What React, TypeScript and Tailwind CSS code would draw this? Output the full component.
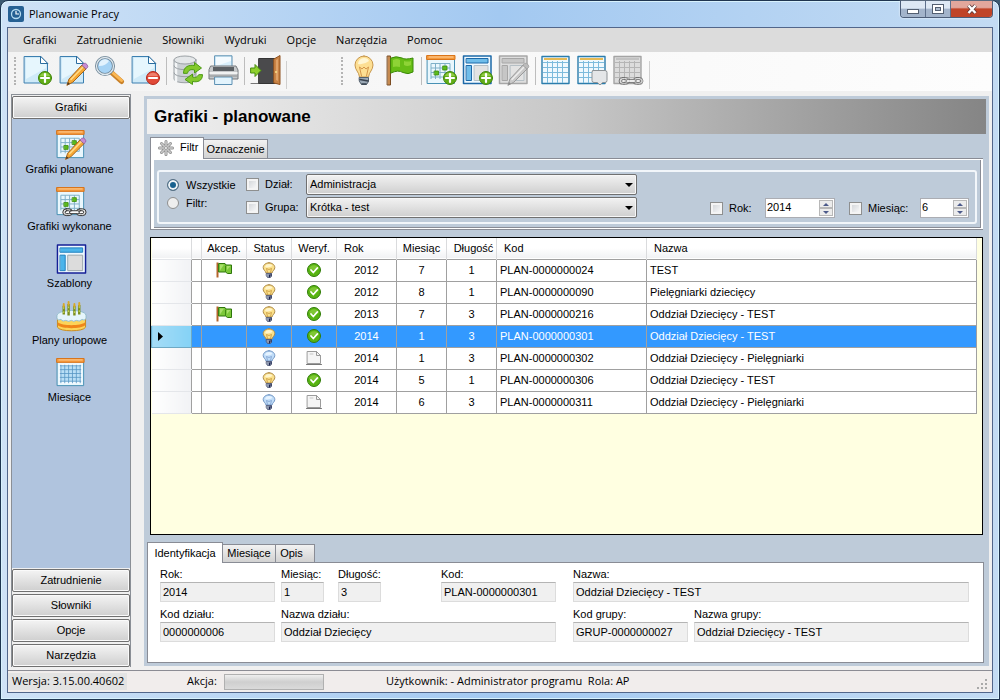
import { useState } from "react";
import type { ReactNode } from "react";

type IconProps = { className?: string };

function Svg({ className, children, size = 32 }: { className?: string; children: ReactNode; size?: number }) {
  return (
    <svg viewBox={`0 0 ${size} ${size}`} fill="none" strokeLinecap="round" strokeLinejoin="round" className={className} aria-hidden="true">
      {children}
    </svg>
  );
}

/* shared icon parts, all on a 32px grid */

function Page() {
  return (
    <>
      <path d="M3.5 1.5h16l7 7v19.500h-23z" fill="#cfeaf8" stroke="#3b7fb0" />
      <path d="M5 3h14v6h6v4L5 24z" fill="#e6f6fd" />
      <path d="M19.500 1.500v7h7z" fill="#fff" stroke="#2a6c9e" />
    </>
  );
}

function PlusBadge() {
  return (
    <>
      <circle cx="24" cy="23" r="6.500" fill="#62ad17" stroke="#3f8409" />
      <path d="M19 21a5.500 5.500 0 0 1 10 0z" fill="#8fcb43" />
      <path d="M24 19v8M20 23h8" stroke="#fff" strokeWidth="2.200" />
    </>
  );
}

function Pencil({ muted = false }: { muted?: boolean }) {
  return (
    <>
      <path d="M10 30l2-6L25 10l4 4-13 13z" fill={muted ? "#c9c9c9" : "#f6a834"} stroke={muted ? "#999" : "#a8651a"} />
      <path d="M14 24.500L26 12" stroke={muted ? "#eee" : "#ffdc8a"} strokeWidth="1.500" />
      <path d="M25 10l1.500-1.500q2-1 3.500 1t.500 3L29 14z" fill={muted ? "#bbb" : "#c68bd4"} stroke={muted ? "#999" : "#86519b"} strokeWidth=".7" />
      <path d="M10 30l1-3 2 2z" fill={muted ? "#888" : "#4b3a28"} />
    </>
  );
}

function CalendarBase() {
  return (
    <>
      <rect x="1.500" y="1" width="27" height="27.500" fill="#eaf7fd" stroke="#4791b4" />
      <rect x="1" y=".5" width="28" height="4" fill="#f59a3c" stroke="#d9741a" />
      <path d="M3 2h24" stroke="#ffd09a" />
      <path d="M5 8.500h19M5 13h19M5 17.500h19M5 22h19M5 8.500V24M9.500 8.500V24M14 8.500V24M19 8.500V24M24 8.500V22" stroke="#7fb0c8" strokeLinecap="butt" />
    </>
  );
}

function GreenDays() {
  return (
    <>
      <rect x="17" y="11" width="4" height="4" fill="#5cbb1c" stroke="#398a0a" strokeWidth=".8" />
      <rect x="8.500" y="16" width="4" height="4" fill="#5cbb1c" stroke="#398a0a" strokeWidth=".8" />
    </>
  );
}

function Chain() {
  return (
    <g stroke="#333" strokeWidth="1">
      <rect x="7" y="22.500" width="10" height="7" rx="3.500" fill="#ddd" />
      <rect x="9.500" y="24.500" width="5" height="3" rx="1.500" fill="#fff" />
      <rect x="21" y="22.500" width="10" height="7" rx="3.500" fill="#ddd" />
      <rect x="23.500" y="24.500" width="5" height="3" rx="1.500" fill="#fff" />
      <rect x="14" y="24.500" width="10" height="3" rx="1.500" fill="#fff" />
    </g>
  );
}

function TemplateBase({ muted = false }: { muted?: boolean }) {
  const line = muted ? "#a6a6a6" : "#1d69a8";
  const fill = muted ? "#c6c6c6" : "#6fbdea";
  return (
    <>
      <rect x="1.500" y="1" width="27.500" height="27.500" fill={muted ? "#dedede" : "#eff9ff"} stroke={line} strokeWidth="1.500" />
      <rect x="4.500" y="3.500" width="21.500" height="4.500" fill={fill} stroke={line} />
      <rect x="4.500" y="10.500" width="5" height="15" fill={fill} stroke={line} />
      <rect x="12.500" y="10.500" width="13.500" height="15" fill="#e3e3e3" stroke="#b5bfc5" />
    </>
  );
}

function SheetBase({ muted = false }: { muted?: boolean }) {
  return (
    <>
      <rect x="2" y="1.500" width="27" height="27" fill={muted ? "#dcdcdc" : "#f0f9fe"} stroke={muted ? "#a4a4a4" : "#2b7dac"} strokeWidth="1.400" />
      <path d="M4 4h23" stroke={muted ? "#c2c2c2" : "#e5ba55"} strokeWidth="2" strokeLinecap="butt" />
      <path d="M3 7.500h25M3 12.500h25M3 17.500h25M3 22.500h25M7.500 6v22M12.500 6v22M17.500 6v22M22.500 6v22" stroke={muted ? "#b5b5b5" : "#7dbbdc"} strokeLinecap="butt" />
    </>
  );
}

function AddPageIcon({ className }: IconProps) {
  return <Svg className={className}><Page /><PlusBadge /></Svg>;
}

function EditPageIcon({ className }: IconProps) {
  return <Svg className={className}><Page /><Pencil /></Svg>;
}

function DeletePageIcon({ className }: IconProps) {
  return (
    <Svg className={className}>
      <Page />
      <circle cx="24" cy="23" r="6.500" fill="#e14a38" stroke="#b3281d" />
      <path d="M19 21a5.500 5.500 0 0 1 10 0z" fill="#ee7f6d" />
      <path d="M20 23h8" stroke="#fff" strokeWidth="2.200" />
    </Svg>
  );
}

function SearchIcon({ className }: IconProps) {
  return (
    <Svg className={className}>
      <path d="M19 18l9.500 8.500" stroke="#c98128" strokeWidth="5" />
      <path d="M20 18l8.500 7.500" stroke="#fbb753" strokeWidth="3" />
      <circle cx="12" cy="11" r="8.500" fill="#a6d3f5" stroke="#6d8596" strokeWidth="3" />
      <circle cx="12" cy="11" r="8.500" stroke="#dfe8ee" strokeWidth="1.300" />
      <path d="M6 11a6 6 0 0 1 10-5q-3 5-10 5" fill="#e2f2fd" />
    </Svg>
  );
}

function DatabaseIcon({ className }: IconProps) {
  return (
    <Svg className={className}>
      <path d="M3 5v19c0 5 22 5 22 0V5" fill="#ccd1d4" stroke="#9ba1a5" />
      <path d="M5 8v18" stroke="#f4f6f7" strokeWidth="2.500" />
      <ellipse cx="14" cy="5" rx="11" ry="4" fill="#e4e7e9" stroke="#9ba1a5" />
      <path d="M3 11c0 5 22 5 22 0M3 18c0 5 22 5 22 0" stroke="#9ba1a5" />
      <path d="M12.500 18c0-6 5-8.500 11-7.500V7.500l7 5.500-7 5v-3c-4-1-6 0-7 3z" fill="#83c92b" stroke="#4c9a14" />
      <path d="M31.500 20c0 6-5 7.500-10 6.500v3l-7.500-5 7.500-5.500v3c3 1 5 0 6-2z" fill="#83c92b" stroke="#4c9a14" />
    </Svg>
  );
}

function PrinterIcon({ className }: IconProps) {
  return (
    <Svg className={className}>
      <rect x="8" y=".8" width="17" height="13" fill="#d9effb" stroke="#5c90b3" />
      <path d="M9 2h15v4L9 11z" fill="#f4fbff" />
      <path d="M4 11h25l2 4v9H2v-9z" fill="#c6c8ca" stroke="#75797c" />
      <path d="M6 12h21v4H6z" fill="#5c6064" />
      <path d="M3 18h27" stroke="#fff" strokeWidth="1.500" />
      <rect x="8" y="22" width="17" height="7.500" fill="#e3f4fd" stroke="#5c90b3" />
      <path d="M3 21h27" stroke="#8c9092" />
    </Svg>
  );
}

function ExitIcon({ className }: IconProps) {
  return (
    <Svg className={className}>
      <path d="M2 28.500h28" stroke="#777" />
      <rect x="10" y="3.500" width="16" height="25" fill="#4a4a4c" stroke="#343434" />
      <path d="M25 4l6-3.500v29l-6-1.500z" fill="#c98345" stroke="#8f5321" />
      <path d="M27 5l2-1v22l-2-1z" fill="#dea268" />
      <circle cx="27" cy="17" r="1" fill="#f9df87" />
      <path d="M2 13h4V9.500l6 6-6 6V18H2z" fill="#8fd02d" stroke="#478c0e" />
    </Svg>
  );
}

function BulbIcon({ className }: IconProps) {
  return (
    <Svg className={className}>
      <path d="M16 1a9 9 0 0 0-9 9c0 5 4 7 4.500 12h9C21 17 25 15 25 10a9 9 0 0 0-9-9z" fill="#fddf93" stroke="#c7974d" />
      <path d="M10 9a6 6 0 0 1 6-6q4 0 5 3-5 4-11 3" fill="#fff6d4" />
      <path d="M13.500 21l-2-9 2.500 2 2-2 2 2 2.500-2-2 9" stroke="#d4964a" />
      <path d="M11.500 22.500h9v4l-2 3h-5l-2-3z" fill="#9aa8b5" stroke="#53606d" />
      <path d="M12 24.500l8 1.500M14 29h4" stroke="#39434f" strokeWidth="1.500" />
    </Svg>
  );
}

function SmallBulbIcon({ className, off = false }: IconProps & { off?: boolean }) {
  return (
    <Svg size={16} className={className}>
      <path d="M8 .8C4.600.8 2.200 3 2.200 5.600c0 2.400 2.300 3 2.800 5.400h6c.5-2.400 2.800-3 2.800-5.400C13.800 3 11.400.8 8 .8z" fill={off ? "#bfdcf8" : "#fbe08a"} stroke={off ? "#7296c4" : "#ad8a48"} />
      <path d="M4 5c.5-2 2-3 4-3s3 1 3.500 2C9 5.500 6.500 6 4 5z" fill={off ? "#e6f3ff" : "#fff5cc"} />
      <path d="M6.500 10.500L5.500 6.500l2.500 1 2.500-1-1 4" stroke={off ? "#7f9fcf" : "#c99840"} strokeWidth=".8" />
      <path d="M5.500 11.500h5v2.500l-1 1.500h-3l-1-1.500z" fill="#8e98ae" stroke="#4c5573" strokeWidth=".8" />
      <path d="M8.500 13v2M10 12v2" stroke="#1c2450" />
    </Svg>
  );
}

function FlagIcon({ className }: IconProps) {
  return (
    <Svg className={className}>
      <rect x="3.500" y="1" width="3" height="29" fill="#c68a50" stroke="#7b4c22" />
      <path d="M7 3q5-2.500 11 0 3 2 11 0v14q-5 3-10 .5-5-3-12 .5z" fill="#67bd16" stroke="#3b8a08" />
      <path d="M9 5q4-2 7 0v7q-4-1-7 0zM20 6q4 1 7 0v4q-4 2-7 0z" fill="#8ed336" />
    </Svg>
  );
}

function SmallFlagIcon({ className }: IconProps) {
  return (
    <Svg size={16} className={className}>
      <path d="M1.500.5v15" stroke="#b4642c" strokeWidth="2" strokeLinecap="butt" />
      <path d="M3 1.500h6l1 1.500h5.500v8.500h-4l-2-1.500H3z" fill="#7cc83a" stroke="#2d760a" />
      <path d="M4 2.500h4l-4 6zM11 4h3.500L11 8z" fill="#a9df6c" />
      <path d="M9.500 4v5.500" stroke="#3d8a12" />
    </Svg>
  );
}

function AddCalendarIcon({ className }: IconProps) {
  return <Svg className={className}><CalendarBase /><GreenDays /><PlusBadge /></Svg>;
}

function EditCalendarIcon({ className }: IconProps) {
  return <Svg className={className}><CalendarBase /><GreenDays /><Pencil /></Svg>;
}

function LinkCalendarIcon({ className }: IconProps) {
  return <Svg className={className}><CalendarBase /><GreenDays /><Chain /></Svg>;
}

function MonthIcon({ className }: IconProps) {
  return (
    <Svg className={className}>
      <CalendarBase />
      <path d="M3 6h24v21H3z" fill="#f1faff" />
      <path d="M5 8h20v16H5z" fill="#b9dff6" />
      <path d="M4 8h22M4 12h22M4 16h22M4 20h22M4 24h22M5 7v19M9 7v19M13 7v19M17 7v19M21 7v19M25 7v19" stroke="#5595c4" strokeWidth=".8" strokeLinecap="butt" />
    </Svg>
  );
}

function AddTemplateIcon({ className }: IconProps) {
  return <Svg className={className}><TemplateBase /><PlusBadge /></Svg>;
}

function EditTemplateIcon({ className }: IconProps) {
  return <Svg className={className}><TemplateBase muted /><Pencil muted /></Svg>;
}

function TemplateIcon({ className }: IconProps) {
  return (
    <Svg className={className}>
      <rect x="1.500" y="1" width="29" height="29" fill="#eff9ff" stroke="#141f96" strokeWidth="1.500" />
      <rect x="4.500" y="4" width="23" height="4.500" fill="#4bb4ea" stroke="#1f7fbd" />
      <rect x="4.500" y="11.500" width="5" height="16" fill="#4bb4ea" stroke="#1f7fbd" />
      <rect x="12.500" y="11.500" width="15" height="16" fill="#dcdcdc" stroke="#9aa5ab" />
    </Svg>
  );
}

function SheetIcon({ className }: IconProps) {
  return <Svg className={className}><SheetBase /></Svg>;
}

function SheetNoteIcon({ className }: IconProps) {
  return (
    <Svg className={className}>
      <SheetBase />
      <path d="M17 15.500h12q2 0 2 2v8q0 2-2 2h-2.500L24 30l-2.500-2.500H18q-2 0-2-2v-8q0-2 1-2z" fill="#e4e6e8" stroke="#8d9296" />
    </Svg>
  );
}

function SheetLinkIcon({ className }: IconProps) {
  return (
    <Svg className={className}>
      <SheetBase muted />
      <g opacity=".5"><Chain /></g>
    </Svg>
  );
}

function CakeIcon({ className }: IconProps) {
  return (
    <Svg className={className}>
      <path d="M1.500 15v12c2 5 27 5 29 0V15z" fill="#fcd45a" stroke="#c88a20" />
      <path d="M2 22c4 4 24 4 28 0v3c-4 4-24 4-28 0z" fill="#f0851a" />
      <path d="M1 15c0-7 30-7 30 0v3q-2 3-4 1-3 3-6 1-3 2-5 0-3 2-6 0-3 2-5-1-3 2-4-1z" fill="#e6f5fb" stroke="#91bccd" />
      <path d="M8 5v9M13 3v12M19 5v10M24 4v10" stroke="#7c8f1d" strokeWidth="2.500" strokeLinecap="butt" />
      <path d="M8 3v3M13 1v3M19 3v3M24 2v3" stroke="#d8a928" strokeWidth="2" />
      <path d="M8 7v5M13 6v6M19 7v5M24 6v6" stroke="#cfdf58" strokeDasharray="1 3" />
    </Svg>
  );
}

function CheckIcon({ className }: IconProps) {
  return (
    <Svg size={16} className={className}>
      <circle cx="8" cy="8" r="6.500" fill="#58b412" stroke="#327d0a" />
      <path d="M3 7a5.200 5.200 0 0 1 10 0q-5 2-10 0" fill="#7ec734" />
      <path d="M5 8l2.300 2.500L11.300 6" stroke="#fff" strokeWidth="1.800" />
    </Svg>
  );
}

function DraftIcon({ className }: IconProps) {
  return (
    <Svg size={16} className={className}>
      <path d="M1.500 1.500h9l4 4v8h-13z" fill="#f5f5f5" stroke="#9b9b9b" />
      <path d="M10.500 1.500v4h4" stroke="#9b9b9b" />
      <path d="M4 4h3" stroke="#c5c5c5" />
      <path d="M.5 14.500h15" stroke="#777" />
    </Svg>
  );
}

function GearIcon({ className }: IconProps) {
  return (
    <Svg size={16} className={className}>
      <path d="M8 1.500v13M1.500 8h13M3.500 3.500l9 9M12.500 3.500l-9 9" stroke="#8d8d8d" strokeWidth="3" />
      <path d="M8 1.500v13M1.500 8h13M3.500 3.500l9 9M12.500 3.500l-9 9" stroke="#c9c9c9" strokeWidth="1.600" />
      <circle cx="8" cy="8" r="1.500" fill="#fff" stroke="#999" />
    </Svg>
  );
}

const MENU = ["Grafiki", "Zatrudnienie", "Słowniki", "Wydruki", "Opcje", "Narzędzia", "Pomoc"];

const MAIN_TOOLS = [
  [
    { label: "Dodaj", icon: AddPageIcon },
    { label: "Edytuj", icon: EditPageIcon },
    { label: "Podgląd", icon: SearchIcon },
    { label: "Usuń", icon: DeletePageIcon },
  ],
  [
    { label: "Odśwież", icon: DatabaseIcon },
    { label: "Drukuj", icon: PrinterIcon },
  ],
  [{ label: "Zamknij", icon: ExitIcon }],
];

const PLAN_TOOLS = [
  [
    { label: "Status", icon: BulbIcon },
    { label: "Akceptacja", icon: FlagIcon },
  ],
  [
    { label: "Dodaj grafik", icon: AddCalendarIcon },
    { label: "Dodaj szablon", icon: AddTemplateIcon },
    { label: "Edytuj szablon", icon: EditTemplateIcon },
  ],
  [
    { label: "Miesiąc", icon: SheetIcon },
    { label: "Uwagi", icon: SheetNoteIcon },
    { label: "Powiązania", icon: SheetLinkIcon },
  ],
];

const SIDE_ITEMS = [
  { label: "Grafiki planowane", icon: EditCalendarIcon },
  { label: "Grafiki wykonane", icon: LinkCalendarIcon },
  { label: "Szablony", icon: TemplateIcon },
  { label: "Plany urlopowe", icon: CakeIcon },
  { label: "Miesiące", icon: MonthIcon },
];

const SIDE_GROUPS = ["Zatrudnienie", "Słowniki", "Opcje", "Narzędzia"];

const PLANS = [
  { flag: true, on: true, ok: true, year: 2012, month: 7, len: 1, code: "PLAN-0000000024", name: "TEST" },
  { flag: false, on: true, ok: true, year: 2012, month: 8, len: 1, code: "PLAN-0000000090", name: "Pielęgniarki dziecięcy" },
  { flag: true, on: true, ok: true, year: 2013, month: 7, len: 3, code: "PLAN-0000000216", name: "Oddział Dziecięcy - TEST" },
  { flag: false, on: true, ok: true, year: 2014, month: 1, len: 3, code: "PLAN-0000000301", name: "Oddział Dziecięcy - TEST" },
  { flag: false, on: false, ok: false, year: 2014, month: 1, len: 3, code: "PLAN-0000000302", name: "Oddział Dziecięcy - Pielęgniarki" },
  { flag: false, on: true, ok: true, year: 2014, month: 5, len: 1, code: "PLAN-0000000306", name: "Oddział Dziecięcy - TEST" },
  { flag: false, on: false, ok: false, year: 2014, month: 6, len: 3, code: "PLAN-0000000311", name: "Oddział Dziecięcy - Pielęgniarki" },
];

const HEADINGS = [
  { label: "Akcep.", className: "text-center" },
  { label: "Status", className: "text-center" },
  { label: "Weryf.", className: "text-center" },
  { label: "Rok", className: "pl-[7px] text-left" },
  { label: "Miesiąc", className: "text-center" },
  { label: "Długość", className: "pl-1 text-center" },
  { label: "Kod", className: "pl-[7px] text-left" },
  { label: "Nazwa", className: "pl-[7px] text-left" },
];

type Tool = { label: string; icon: (props: IconProps) => ReactNode };

function Toolbar({ groups }: { groups: Tool[][] }) {
  return (
    <div className="flex items-center pl-[3px]">
      <span className="mr-[3px] h-7 border-l-2 border-dotted border-[#b4b4b4]" />
      {groups.map((tools, i) => (
        <div key={i} className="flex items-center">
          {i > 0 && <span className="mr-[2px] ml-[3px] h-7 w-px bg-[#bdbdbd]" />}
          {tools.map(({ label, icon: Icon }) => (
            <button key={label} type="button" aria-label={label} title={label} className="flex h-9 w-9 items-center justify-center">
              <Icon className="h-8 w-8" />
            </button>
          ))}
        </div>
      ))}
      <span className="ml-[3px] h-7 w-px self-end bg-[#cfcfcf]" />
    </div>
  );
}

function TitleBar() {
  return (
    <header className="flex h-[26px] items-start justify-between">
      <div className="flex h-[26px] items-center gap-[5px] pl-px">
        <svg viewBox="0 0 16 16" className="h-4 w-4" fill="none" aria-hidden="true">
          <rect width="16" height="16" rx="2" fill="#256093" />
          <circle cx="8" cy="8" r="4.500" stroke="#b5dcf2" strokeWidth="1.300" />
          <path d="M8 5v3h3" stroke="#fff" strokeWidth="1.200" />
        </svg>
        <h1 className="text-[11px]">Planowanie Pracy</h1>
      </div>
      <div className="flex h-[17px] overflow-hidden rounded-b border border-t-0 border-[#4c5d78] shadow-[0_0_2px_#fff]">
        <button type="button" aria-label="Minimalizuj" className="flex w-[25px] items-center justify-center border-r border-[#5e708c] bg-linear-to-b from-[#dde8f4] from-45% to-[#a3b4cb] to-50%">
          <svg viewBox="0 0 14 12" className="h-3 w-[14px]" aria-hidden="true"><rect x="1.500" y="6.500" width="11" height="4" fill="#fff" stroke="#535f71" /></svg>
        </button>
        <button type="button" aria-label="Maksymalizuj" className="flex w-[25px] items-center justify-center border-r border-[#5e708c] bg-linear-to-b from-[#dde8f4] from-45% to-[#a3b4cb] to-50%">
          <svg viewBox="0 0 14 12" className="h-3 w-[14px]" aria-hidden="true">
            <rect x="1.500" y="1.500" width="11" height="9" fill="#fff" stroke="#535f71" />
            <rect x="4.500" y="4.500" width="5" height="3" fill="#aebdd0" stroke="#535f71" />
          </svg>
        </button>
        <button type="button" aria-label="Zamknij okno" className="flex w-[41px] items-center justify-center bg-linear-to-b from-[#e2a79c] from-40% to-[#c04428] to-50%">
          <svg viewBox="0 0 14 12" className="h-3 w-[14px]" aria-hidden="true">
            <path d="M3.500 2.500l7 7.500M10.500 2.500l-7 7.500" stroke="#5b3a3a" strokeWidth="4" />
            <path d="M3.500 2.500l7 7.500M10.500 2.500l-7 7.500" stroke="#fff" strokeWidth="2.400" />
          </svg>
        </button>
      </div>
    </header>
  );
}

function SideButton({ label }: { label: string }) {
  return (
    <button type="button" className="h-[23px] w-full rounded-[2px] border border-[#707070] bg-linear-to-b from-[#f4f4f4] to-[#cfcfcf] text-center shadow-[inset_0_0_0_1px_#fafafa]">
      {label}
    </button>
  );
}

function Sidebar() {
  return (
    <nav className="flex w-[120px] shrink-0 flex-col border border-b-0 border-[#8a8f96] bg-[#b0c4de]">
      <div className="bg-[#f0f0f0] pt-px">
        <SideButton label="Grafiki" />
      </div>
      <ul className="flex flex-1 flex-col gap-[11px] pt-[11px]">
        {SIDE_ITEMS.map(({ label, icon: Icon }) => (
          <li key={label}>
            <a href="#" className="flex h-[46px] flex-col items-center justify-between">
              <Icon className="h-[31px] w-[31px]" />
              <span className="pr-[3px] leading-[14px]">{label}</span>
            </a>
          </li>
        ))}
      </ul>
      <div className="flex flex-col gap-[2px] bg-[#f0f0f0] pt-px">
        {SIDE_GROUPS.map((label) => (
          <SideButton key={label} label={label} />
        ))}
      </div>
    </nav>
  );
}

function Check({ label, id, className = "" }: { label: string; id: string; className?: string }) {
  return (
    <div className={`flex items-center gap-[6px] ${className}`}>
      <input id={id} type="checkbox" className="h-[13px] w-[13px] appearance-none border border-[#8e8f8f] bg-linear-to-br from-[#cdd0d4] to-white shadow-[inset_0_0_0_2px_#f4f4f4] checked:bg-[#2b5f8c]" />
      <label htmlFor={id}>{label}</label>
    </div>
  );
}

function Radio({ label, id, defaultChecked }: { label: string; id: string; defaultChecked?: boolean }) {
  return (
    <div className="flex h-[18px] items-center gap-[7px]">
      <input
        id={id}
        type="radio"
        name="scope"
        defaultChecked={defaultChecked}
        className="h-3 w-3 appearance-none rounded-full border border-[#8e8f8f] bg-[#eeeeee] checked:border-[#5a7184] checked:bg-[#17618f] checked:shadow-[inset_0_0_0_2px_#eef3f6]"
      />
      <label htmlFor={id}>{label}</label>
    </div>
  );
}

function Combo({ label, options }: { label: string; options: string[] }) {
  return (
    <div className="relative">
      <select aria-label={label} className="block h-[21px] w-full appearance-none rounded-[2px] border border-[#707070] bg-linear-to-b from-[#f2f2f2] to-[#cfcfcf] pl-[3px] text-[11px] leading-[19px] shadow-[inset_0_0_0_1px_#f7f7f7]">
        {options.map((o) => (
          <option key={o}>{o}</option>
        ))}
      </select>
      <svg viewBox="0 0 8 4" className="pointer-events-none absolute top-[9px] right-1 h-1 w-2" aria-hidden="true">
        <path d="M0 0h8L4 4z" fill="#000" />
      </svg>
    </div>
  );
}

function Spinner({ label, value, className }: { label: string; value: number; className: string }) {
  const [current, setCurrent] = useState(value);
  return (
    <div className={`flex h-5 border border-[#abadb3] bg-white p-px ${className}`}>
      <input
        aria-label={label}
        value={current}
        onChange={(e) => setCurrent(Number(e.target.value) || 0)}
        className="min-w-0 flex-1 pb-[2px] text-[11px] leading-[14px] outline-none"
      />
      <div className="flex w-[14px] flex-col">
        <button type="button" aria-label={`${label} +`} onClick={() => setCurrent(current + 1)} className="flex flex-1 items-center justify-center border border-[#b8b8b8] bg-[#ececec]">
          <svg viewBox="0 0 6 3" className="h-[3px] w-[6px]" aria-hidden="true"><path d="M0 3h6L3 0z" fill="#4c5a8a" /></svg>
        </button>
        <button type="button" aria-label={`${label} -`} onClick={() => setCurrent(current - 1)} className="flex flex-1 items-center justify-center border border-[#b8b8b8] bg-[#ececec]">
          <svg viewBox="0 0 6 3" className="h-[3px] w-[6px]" aria-hidden="true"><path d="M0 0h6L3 3z" fill="#4c5a8a" /></svg>
        </button>
      </div>
    </div>
  );
}

function FilterPanel() {
  return (
    <section className="mx-[3px] mt-[3px]">
      <div role="tablist" className="flex items-end">
        <button type="button" role="tab" aria-selected="true" className="z-10 -mb-px flex h-[22px] w-[54px] items-center gap-[6px] border border-b-0 border-[#898c95] bg-white pb-[2px] pl-[7px]">
          <GearIcon className="h-4 w-4" />
          Filtr
        </button>
        <button type="button" role="tab" aria-selected="false" className="-mb-px -ml-px h-5 w-[65px] border border-[#898c95] bg-linear-to-b from-[#f2f2f2] to-[#d2d2d2] text-center">
          Oznaczenie
        </button>
      </div>
      <div className="border border-r-0 border-[#898c95] bg-white pt-px pr-[2px] pb-px pl-[3px]">
        <div className="border-r border-b border-[#898c95] bg-[#becbd9] px-[3px] pt-[10px] pb-[3px]">
          <fieldset className="flex items-stretch justify-between rounded-[3px] border-2 border-[#f2f6fa] pt-[2px] pr-[6px] pb-1 pl-2">
            <div className="flex">
              <div className="w-[79px] pt-[2px]">
                <Radio id="all" label="Wszystkie" defaultChecked />
                <Radio id="filtered" label="Filtr:" />
              </div>
              <div className="flex w-[60px] flex-col gap-[2px]">
                <Check id="dept" label="Dział:" className="h-[21px]" />
                <Check id="group" label="Grupa:" className="h-[21px]" />
              </div>
              <div className="flex w-[331px] flex-col gap-[2px]">
                <Combo label="Dział" options={["Administracja"]} />
                <Combo label="Grupa" options={["Krótka - test"]} />
              </div>
            </div>
            <div className="flex items-center self-end">
              <Check id="year" label="Rok:" className="w-[55px]" />
              <Spinner label="Rok" value={2014} className="mr-[14px] w-[70px]" />
              <Check id="month" label="Miesiąc:" className="w-[71px]" />
              <Spinner label="Miesiąc" value={6} className="w-[49px]" />
            </div>
          </fieldset>
        </div>
      </div>
    </section>
  );
}

function PlanTable() {
  const [selected, setSelected] = useState("PLAN-0000000301");

  return (
    <section className="mx-[3px] mt-[7px] flex-1 border border-black bg-[#ffffe1] pr-[5px]">
      <table className="w-full table-fixed border-collapse">
        <colgroup>
          <col className="w-10" />
          <col className="w-[10px]" />
          <col className="w-[45px]" />
          <col className="w-[45px]" />
          <col className="w-[45px]" />
          <col className="w-[60px]" />
          <col className="w-[50px]" />
          <col className="w-[50px]" />
          <col className="w-[150px]" />
          <col />
        </colgroup>
        <thead>
          <tr className="h-[21px] border-b border-[#a0a0a0] bg-linear-to-b from-white from-50% to-[#f1f2f4]">
            <th className="border-r border-[#dadbdd]" />
            <th className="border-r border-[#dadbdd]" />
            {HEADINGS.map(({ label, className }) => (
              <th key={label} scope="col" className={`border-r border-[#dadbdd] font-normal whitespace-nowrap ${className}`}>
                {label}
              </th>
            ))}
          </tr>
        </thead>
        <tbody>
          {PLANS.map((plan) => {
            const active = plan.code === selected;
            const cell = "border border-[#a0a0a0]";
            return (
              <tr key={plan.code} onClick={() => setSelected(plan.code)} className={`h-[22px] ${active ? "bg-[#3399ff] text-white" : "bg-white"}`}>
                <th className={active ? "border border-[#6fa9c4] bg-linear-to-r from-[#a5dcf6] to-[#84d2f6]" : "border-y border-[#e4e6ea] bg-linear-to-r from-white to-[#f1f2f5]"}>
                  {active && (
                    <svg viewBox="0 0 5 9" className="ml-[6px] h-[9px] w-[5px]" aria-hidden="true"><path d="M0 0l5 4.500L0 9z" fill="#000" /></svg>
                  )}
                </th>
                <td className={cell} />
                <td className={cell}>{plan.flag && <SmallFlagIcon className="mx-auto h-4 w-4" />}</td>
                <td className={cell}><SmallBulbIcon off={!plan.on} className="mx-auto h-4 w-4" /></td>
                <td className={cell}>{plan.ok ? <CheckIcon className="mx-auto h-4 w-4" /> : <DraftIcon className="mx-auto h-4 w-4" />}</td>
                <td className={`${cell} text-center`}>{plan.year}</td>
                <td className={`${cell} text-center`}>{plan.month}</td>
                <td className={`${cell} text-center`}>{plan.len}</td>
                <td className={`${cell} pl-[3px]`}>{plan.code}</td>
                <td className={`${cell} pl-[3px]`}>{plan.name}</td>
              </tr>
            );
          })}
        </tbody>
      </table>
    </section>
  );
}

function Field({ label, value, id, className }: { label: string; value: string; id: string; className: string }) {
  return (
    <div className={className}>
      <label htmlFor={id} className="block leading-4">{label}</label>
      <input id={id} readOnly value={value} className="block h-5 w-full border border-[#dcdcdc] border-t-[#b4b4b4] bg-[#f0f0f0] px-[2px] text-[11px] leading-[18px] outline-none" />
    </div>
  );
}

function Details() {
  return (
    <section className="mt-[7px] mr-[2px]">
      <div role="tablist" className="flex items-end">
        <button type="button" role="tab" aria-selected="true" className="z-10 -mb-px h-[21px] w-[76px] border border-b-0 border-[#898c95] bg-white text-center">
          Identyfikacja
        </button>
        <button type="button" role="tab" aria-selected="false" className="-mb-px -ml-px h-[19px] w-[54px] border border-[#898c95] bg-linear-to-b from-[#f2f2f2] to-[#d2d2d2] text-center">
          Miesiące
        </button>
        <button type="button" role="tab" aria-selected="false" className="-mb-px -ml-px h-[19px] w-10 border border-[#898c95] bg-linear-to-b from-[#f2f2f2] to-[#d2d2d2] pr-[7px] text-center">
          Opis
        </button>
      </div>
      <div className="flex flex-col gap-1 border border-[#898c95] bg-white pt-[3px] pr-[14px] pb-5 pl-3">
        <div className="flex">
          <Field id="d-year" label="Rok:" value="2014" className="mr-[6px] w-[115px]" />
          <Field id="d-month" label="Miesiąc:" value="1" className="mr-[14px] w-[43px]" />
          <Field id="d-len" label="Długość:" value="3" className="mr-[60px] w-[43px]" />
          <Field id="d-code" label="Kod:" value="PLAN-0000000301" className="mr-[17px] w-[115px]" />
          <Field id="d-name" label="Nazwa:" value="Oddział Dziecięcy - TEST" className="flex-1" />
        </div>
        <div className="flex">
          <Field id="d-dept" label="Kod działu:" value="0000000006" className="mr-[6px] w-[115px]" />
          <Field id="d-dept-name" label="Nazwa działu:" value="Oddział Dziecięcy" className="mr-[17px] w-[275px]" />
          <Field id="d-group" label="Kod grupy:" value="GRUP-0000000027" className="mr-[6px] w-[115px]" />
          <Field id="d-group-name" label="Nazwa grupy:" value="Oddział Dziecięcy - TEST" className="flex-1" />
        </div>
      </div>
    </section>
  );
}

function StatusBar() {
  return (
    <footer className="flex h-[22px] items-center border-t border-[#8c8c94] bg-[#f1edec] text-[11px]">
      <span className="w-[119px] bg-[#e3e3e3] pl-1">Wersja: 3.15.00.40602</span>
      <label htmlFor="progress" className="ml-[60px] w-[37px]">Akcja:</label>
      <div id="progress" role="progressbar" aria-label="Akcja" className="h-4 w-[100px] border border-[#b0b0b0] bg-linear-to-b from-[#eeeeee] via-[#cfcfcf] to-[#dadada]" />
      <span className="ml-[62px] whitespace-pre">Użytkownik: - Administrator programu  Rola: AP</span>
      <svg viewBox="0 0 12 12" className="mr-1 mb-[2px] ml-auto h-3 w-3 self-end" aria-hidden="true">
        <path d="M9 1h2v2H9zM5 5h2v2H5zM9 5h2v2H9zM1 9h2v2H1zM5 9h2v2H5zM9 9h2v2H9z" fill="#a9a9a9" />
      </svg>
    </footer>
  );
}

export default function App() {
  return (
    <div className="bg-[#3c5a72]">
      <div className="flex min-h-screen flex-col rounded-t-lg border border-[#1f3550] bg-linear-to-r from-[#cfe2f6] via-[#a3c9f1] to-[#c3dbf3] px-[6px] pb-[6px] font-['Open_Sans','Noto_Sans',sans-serif] text-black shadow-[inset_0_0_0_1px_#d8f2fd]">
        <TitleBar />
        <div className="flex flex-1 flex-col border border-[#52668a] bg-[#f0f0f0]">
          <nav className="flex h-6 items-center gap-5 bg-[#dcdcdc] pl-[15px] text-[11px]">
            {MENU.map((label) => (
              <button key={label} type="button">{label}</button>
            ))}
          </nav>
          <div className="flex h-[39px] items-center gap-[51px] bg-linear-to-r from-[#f3f3f3] to-[#fdfdfd] pb-[2px] pl-[3px]">
            <Toolbar groups={MAIN_TOOLS} />
            <Toolbar groups={PLAN_TOOLS} />
          </div>
          <div className="flex flex-1 gap-[13px] px-[3px] py-[3px] font-['Liberation_Sans',Arial,sans-serif] text-[11px]">
            <Sidebar />
            <main className="mt-[2px] mb-px flex min-w-0 flex-1 flex-col bg-[#becbd9] p-[3px]">
              <h2 className="flex h-[35px] items-center bg-linear-to-r from-[#f0f0f0] via-[#c8c8c8] to-[#858585] pl-[7px] text-[17px] font-bold">
                Grafiki - planowane
              </h2>
              <FilterPanel />
              <PlanTable />
              <Details />
            </main>
          </div>
          <StatusBar />
        </div>
      </div>
    </div>
  );
}
